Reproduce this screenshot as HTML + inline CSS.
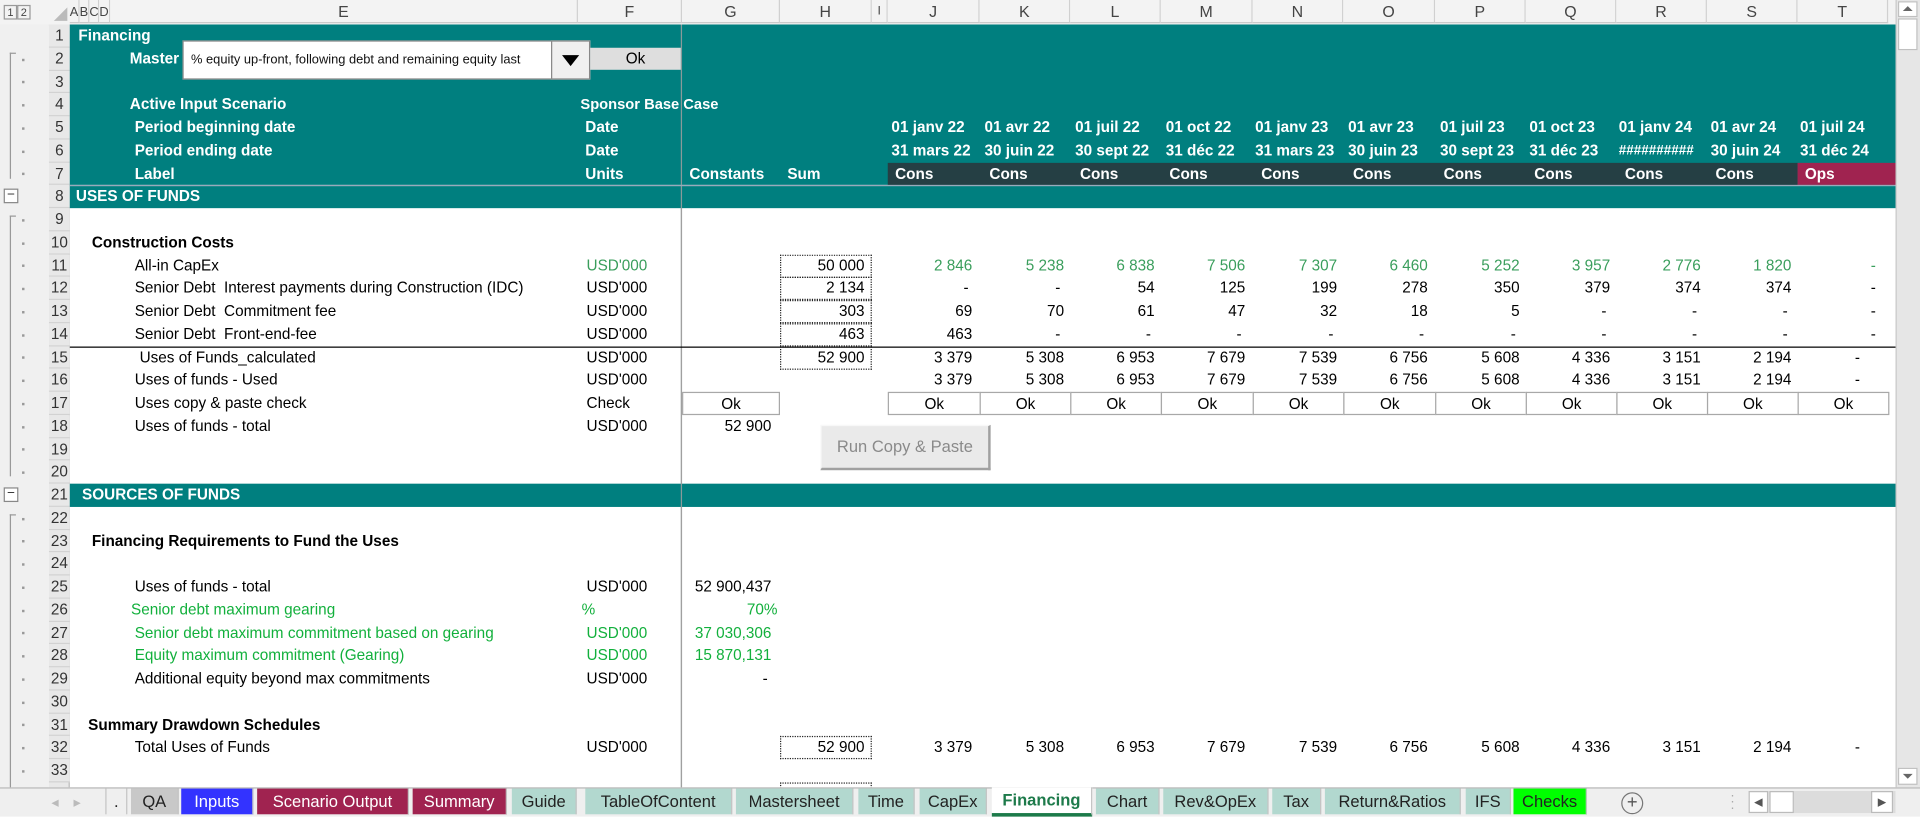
<!DOCTYPE html>
<html><head><meta charset="utf-8">
<style>
html,body{margin:0;padding:0;width:1920px;height:817px;overflow:hidden;background:#fff}
#w{position:absolute;left:0;top:0;width:1568px;height:667px;transform:scale(1.22449);transform-origin:0 0;font-family:"Liberation Sans Narrow","Liberation Sans",sans-serif;font-size:12.5px;color:#000;overflow:hidden}
.a{position:absolute;white-space:nowrap}
.t{height:18.75px;line-height:18.75px}
.b{font-weight:bold}
.wt{color:#fff}
.r{text-align:right}
.g1{color:#3a9e5c}
.g2{color:#12b03c}
.teal{background:#007f7f}
.hdr{position:absolute;top:0;height:19px;line-height:20px;text-align:center;color:#444;font-family:"Liberation Sans",sans-serif;font-size:13px;border-right:1px solid #d0d0d0;box-sizing:border-box;background:#f3f3f3;border-bottom:1px solid #c8c8c8}
.sm{font-size:10.5px}
.rh{position:absolute;left:40px;width:17px;height:18.75px;line-height:18.75px;text-align:center;color:#333;font-size:12.5px;background:#e8e8e8;border-bottom:1px solid #d2d2d2;box-sizing:border-box}
.ok{position:absolute;height:19px;line-height:19px;text-align:center;border:1px solid #a8a8a8;box-sizing:border-box;background:#fff}
.dot{position:absolute;border:1px dotted #222;box-sizing:border-box}
.tab{position:absolute;top:644px;height:21px;line-height:21px;text-align:center;font-size:13.5px;color:#222;box-sizing:border-box;border-right:1px solid #c4c4c4}
.pt{background:#b2d8cf}
.mg{background:#a02350;color:#fff}
.gd{position:absolute;left:18px;width:2px;height:2px;background:#999}
</style></head><body><div id="w">

<!-- column header -->
<div class="a" style="left:0;top:0;width:1548px;height:20px;background:#f3f3f3;border-bottom:1px solid #c8c8c8"></div>
<div class="a" style="left:3px;top:4px;width:9px;height:10px;border:1px solid #999;font-size:9px;line-height:10px;text-align:center;color:#444;font-family:'Liberation Sans',sans-serif">1</div>
<div class="a" style="left:14px;top:4px;width:9px;height:10px;border:1px solid #999;font-size:9px;line-height:10px;text-align:center;color:#444;font-family:'Liberation Sans',sans-serif">2</div>
<div class="a" style="left:44px;top:6px;width:0;height:0;border-left:11px solid transparent;border-bottom:11px solid #bbb"></div>
<div class="hdr sm" style="left:57px;width:8px">A</div>
<div class="hdr sm" style="left:65px;width:8px">B</div>
<div class="hdr sm" style="left:73px;width:8px">C</div>
<div class="hdr sm" style="left:81px;width:9px">D</div>
<div class="hdr" style="left:90px;width:382px">E</div>
<div class="hdr" style="left:472px;width:85px">F</div>
<div class="hdr" style="left:557px;width:80px">G</div>
<div class="hdr" style="left:637px;width:75px">H</div>
<div class="hdr" style="left:712px;width:13px;font-size:10px">I</div>
<div class="hdr" style="left:725px;width:75px">J</div>
<div class="hdr" style="left:800px;width:74px">K</div>
<div class="hdr" style="left:874px;width:74px">L</div>
<div class="hdr" style="left:948px;width:75px">M</div>
<div class="hdr" style="left:1023px;width:74px">N</div>
<div class="hdr" style="left:1097px;width:75px">O</div>
<div class="hdr" style="left:1172px;width:74px">P</div>
<div class="hdr" style="left:1246px;width:74px">Q</div>
<div class="hdr" style="left:1320px;width:74px">R</div>
<div class="hdr" style="left:1394px;width:74px">S</div>
<div class="hdr" style="left:1468px;width:74px">T</div>

<!-- gutter -->
<div class="a" style="left:0;top:20px;width:40px;height:623px;background:#f0f0f0"></div>
<div class="a" style="left:40px;top:20px;width:17px;height:623px;background:#e8e8e8;border-right:1px solid #bcbcbc;box-sizing:border-box"></div>
<div class="a" style="left:8px;top:43px;width:4px;height:102px;border-left:1px solid #999;border-top:1px solid #999"></div>
<div class="a" style="left:8px;top:176px;width:4px;height:212px;border-left:1px solid #999;border-top:1px solid #999"></div>
<div class="a" style="left:8px;top:420px;width:4px;height:223px;border-left:1px solid #999;border-top:1px solid #999"></div>
<div class="gd" style="top:48px"></div><div class="gd" style="top:66px"></div><div class="gd" style="top:85px"></div><div class="gd" style="top:104px"></div><div class="gd" style="top:123px"></div><div class="gd" style="top:141px"></div>
<div class="gd" style="top:179px"></div><div class="gd" style="top:198px"></div><div class="gd" style="top:216px"></div><div class="gd" style="top:235px"></div><div class="gd" style="top:254px"></div><div class="gd" style="top:273px"></div><div class="gd" style="top:291px"></div><div class="gd" style="top:310px"></div><div class="gd" style="top:329px"></div><div class="gd" style="top:348px"></div><div class="gd" style="top:366px"></div><div class="gd" style="top:385px"></div>
<div class="gd" style="top:423px"></div><div class="gd" style="top:441px"></div><div class="gd" style="top:460px"></div><div class="gd" style="top:479px"></div><div class="gd" style="top:498px"></div><div class="gd" style="top:516px"></div><div class="gd" style="top:535px"></div><div class="gd" style="top:554px"></div><div class="gd" style="top:573px"></div><div class="gd" style="top:591px"></div><div class="gd" style="top:610px"></div><div class="gd" style="top:629px"></div>
<div class="a" style="left:3px;top:154px;width:10px;height:10px;border:1px solid #888;background:#fff;font-size:11px;line-height:9px;text-align:center;color:#333">−</div>
<div class="a" style="left:3px;top:398px;width:10px;height:10px;border:1px solid #888;background:#fff;font-size:11px;line-height:9px;text-align:center;color:#333">−</div>

<div class="rh" style="top:20px">1</div><div class="rh" style="top:38.75px">2</div><div class="rh" style="top:57.5px">3</div><div class="rh" style="top:76.25px">4</div><div class="rh" style="top:95px">5</div><div class="rh" style="top:113.75px">6</div><div class="rh" style="top:132.5px">7</div><div class="rh" style="top:151.25px">8</div><div class="rh" style="top:170px">9</div><div class="rh" style="top:188.75px">10</div><div class="rh" style="top:207.5px">11</div><div class="rh" style="top:226.25px">12</div><div class="rh" style="top:245px">13</div><div class="rh" style="top:263.75px">14</div><div class="rh" style="top:282.5px">15</div><div class="rh" style="top:301.25px">16</div><div class="rh" style="top:320px">17</div><div class="rh" style="top:338.75px">18</div><div class="rh" style="top:357.5px">19</div><div class="rh" style="top:376.25px">20</div><div class="rh" style="top:395px">21</div><div class="rh" style="top:413.75px">22</div><div class="rh" style="top:432.5px">23</div><div class="rh" style="top:451.25px">24</div><div class="rh" style="top:470px">25</div><div class="rh" style="top:488.75px">26</div><div class="rh" style="top:507.5px">27</div><div class="rh" style="top:526.25px">28</div><div class="rh" style="top:545px">29</div><div class="rh" style="top:563.75px">30</div><div class="rh" style="top:582.5px">31</div><div class="rh" style="top:601.25px">32</div><div class="rh" style="top:620px">33</div>

<!-- teal bands -->
<div class="a teal" style="left:57px;top:20px;width:1491px;height:131px"></div>
<div class="a teal" style="left:57px;top:151.25px;width:1491px;height:18.75px;border-top:1px solid #8fb5b5;box-sizing:border-box"></div>
<div class="a teal" style="left:57px;top:395px;width:1491px;height:18.75px"></div>
<div class="a" style="left:725px;top:132.5px;width:743px;height:18.75px;background:#253f44"></div>
<div class="a" style="left:1468px;top:132.5px;width:80px;height:18.75px;background:#a02350"></div>
<div class="a" style="left:556px;top:20px;width:1px;height:623px;background:#8a9a9a"></div>
<div class="a" style="left:556px;top:170px;width:1px;height:225px;background:#a0a0a0"></div>
<div class="a" style="left:556px;top:414px;width:1px;height:229px;background:#a0a0a0"></div>

<!-- header texts -->
<div class="a t b wt" style="left:64px;top:20px">Financing</div>
<div class="a t b wt" style="left:106px;top:38.75px">Master</div>
<div class="a" style="left:149px;top:33px;width:333px;height:32px;background:#fff;border:1px solid #888;box-sizing:border-box"></div>
<div class="a" style="left:156px;top:41px;font-size:10.5px;line-height:16px;color:#111">% equity up-front, following debt and remaining equity last</div>
<div class="a" style="left:450px;top:33px;width:32px;height:32px;background:#f0f0f0;border:1px solid #888;box-sizing:border-box"></div>
<div class="a" style="left:459px;top:45px;width:0;height:0;border-left:7px solid transparent;border-right:7px solid transparent;border-top:9px solid #000"></div>
<div class="a" style="left:482px;top:38.75px;width:74px;height:18px;background:#dedede;text-align:center;line-height:18px">Ok</div>
<div class="a t b wt" style="left:106px;top:76.25px">Active Input Scenario</div>
<div class="a t b wt" style="left:474px;top:76.25px;font-size:12px">Sponsor Base Case</div>
<div class="a t b wt" style="left:110px;top:95px">Period beginning date</div>
<div class="a t b wt" style="left:478px;top:95px">Date</div>
<div class="a t b wt" style="left:110px;top:113.75px">Period ending date</div>
<div class="a t b wt" style="left:478px;top:113.75px">Date</div>
<div class="a t b wt" style="left:110px;top:132.5px">Label</div>
<div class="a t b wt" style="left:478px;top:132.5px">Units</div>
<div class="a t b wt" style="left:563px;top:132.5px">Constants</div>
<div class="a t b wt" style="left:643px;top:132.5px">Sum</div>
<div class="a" style="left:57px;top:150.5px;width:1491px;height:1px;background:#9ab"></div>

<div class="a t b wt" style="left:728px;top:95px">01 janv 22</div><div class="a t b wt" style="left:804px;top:95px">01 avr 22</div><div class="a t b wt" style="left:878px;top:95px">01 juil 22</div><div class="a t b wt" style="left:952px;top:95px">01 oct 22</div><div class="a t b wt" style="left:1025px;top:95px">01 janv 23</div><div class="a t b wt" style="left:1101px;top:95px">01 avr 23</div><div class="a t b wt" style="left:1176px;top:95px">01 juil 23</div><div class="a t b wt" style="left:1249px;top:95px">01 oct 23</div><div class="a t b wt" style="left:1322px;top:95px">01 janv 24</div><div class="a t b wt" style="left:1397px;top:95px">01 avr 24</div><div class="a t b wt" style="left:1470px;top:95px">01 juil 24</div>
<div class="a t b wt" style="left:728px;top:113.75px">31 mars 22</div><div class="a t b wt" style="left:804px;top:113.75px">30 juin 22</div><div class="a t b wt" style="left:878px;top:113.75px">30 sept 22</div><div class="a t b wt" style="left:952px;top:113.75px">31 déc 22</div><div class="a t b wt" style="left:1025px;top:113.75px">31 mars 23</div><div class="a t b wt" style="left:1101px;top:113.75px">30 juin 23</div><div class="a t b wt" style="left:1176px;top:113.75px">30 sept 23</div><div class="a t b wt" style="left:1249px;top:113.75px">31 déc 23</div><div class="a t b wt" style="left:1322px;top:113.75px;font-size:11px">##########</div><div class="a t b wt" style="left:1397px;top:113.75px">30 juin 24</div><div class="a t b wt" style="left:1470px;top:113.75px">31 déc 24</div>
<div class="a t b wt" style="left:731px;top:132.5px">Cons</div><div class="a t b wt" style="left:808px;top:132.5px">Cons</div><div class="a t b wt" style="left:882px;top:132.5px">Cons</div><div class="a t b wt" style="left:955px;top:132.5px">Cons</div><div class="a t b wt" style="left:1030px;top:132.5px">Cons</div><div class="a t b wt" style="left:1105px;top:132.5px">Cons</div><div class="a t b wt" style="left:1179px;top:132.5px">Cons</div><div class="a t b wt" style="left:1253px;top:132.5px">Cons</div><div class="a t b wt" style="left:1327px;top:132.5px">Cons</div><div class="a t b wt" style="left:1401px;top:132.5px">Cons</div><div class="a t b wt" style="left:1474px;top:132.5px">Ops</div>

<div class="a t b wt" style="left:62px;top:151.25px">USES OF FUNDS</div>
<div class="a t b wt" style="left:67px;top:395px">SOURCES OF FUNDS</div>

<!-- uses -->
<div class="a t b" style="left:75px;top:188.75px">Construction Costs</div>
<div class="a t" style="left:110px;top:207.5px">All-in CapEx</div><div class="a t g1" style="left:479px;top:207.5px">USD'000</div>
<div class="a t" style="left:110px;top:226.25px">Senior Debt&nbsp; Interest payments during Construction (IDC)</div><div class="a t" style="left:479px;top:226.25px">USD'000</div>
<div class="a t" style="left:110px;top:245px">Senior Debt&nbsp; Commitment fee</div><div class="a t" style="left:479px;top:245px">USD'000</div>
<div class="a t" style="left:110px;top:263.75px">Senior Debt&nbsp; Front-end-fee</div><div class="a t" style="left:479px;top:263.75px">USD'000</div>
<div class="a t" style="left:114px;top:282.5px">Uses of Funds_calculated</div><div class="a t" style="left:479px;top:282.5px">USD'000</div>
<div class="a t" style="left:110px;top:301.25px">Uses of funds - Used</div><div class="a t" style="left:479px;top:301.25px">USD'000</div>
<div class="a t" style="left:110px;top:320px">Uses copy &amp; paste check</div><div class="a t" style="left:479px;top:320px">Check</div>
<div class="a t" style="left:110px;top:338.75px">Uses of funds - total</div><div class="a t" style="left:479px;top:338.75px">USD'000</div>
<div class="a" style="left:57px;top:283px;width:1491px;height:1px;background:#000"></div>

<div class="dot" style="left:637px;top:207.5px;width:75px;height:19px"></div><div class="dot" style="left:637px;top:226.25px;width:75px;height:19px"></div><div class="dot" style="left:637px;top:245px;width:75px;height:19px"></div><div class="dot" style="left:637px;top:263.75px;width:75px;height:19px"></div><div class="dot" style="left:637px;top:282.5px;width:75px;height:19px"></div>
<div class="a t r" style="left:637px;width:69px;top:207.5px">50 000</div><div class="a t r" style="left:637px;width:69px;top:226.25px">2 134</div><div class="a t r" style="left:637px;width:69px;top:245px">303</div><div class="a t r" style="left:637px;width:69px;top:263.75px">463</div><div class="a t r" style="left:637px;width:69px;top:282.5px">52 900</div>

<div class="a t r g1" style="left:725px;width:69px;top:207.5px">2 846</div><div class="a t r g1" style="left:800px;width:69px;top:207.5px">5 238</div><div class="a t r g1" style="left:874px;width:69px;top:207.5px">6 838</div><div class="a t r g1" style="left:948px;width:69px;top:207.5px">7 506</div><div class="a t r g1" style="left:1023px;width:69px;top:207.5px">7 307</div><div class="a t r g1" style="left:1097px;width:69px;top:207.5px">6 460</div><div class="a t r g1" style="left:1172px;width:69px;top:207.5px">5 252</div><div class="a t r g1" style="left:1246px;width:69px;top:207.5px">3 957</div><div class="a t r g1" style="left:1320px;width:69px;top:207.5px">2 776</div><div class="a t r g1" style="left:1394px;width:69px;top:207.5px">1 820</div><div class="a t r g1" style="left:1468px;width:64px;top:207.5px">-</div>
<div class="a t r" style="left:725px;width:66px;top:226.25px">-</div><div class="a t r" style="left:800px;width:66px;top:226.25px">-</div><div class="a t r" style="left:874px;width:69px;top:226.25px">54</div><div class="a t r" style="left:948px;width:69px;top:226.25px">125</div><div class="a t r" style="left:1023px;width:69px;top:226.25px">199</div><div class="a t r" style="left:1097px;width:69px;top:226.25px">278</div><div class="a t r" style="left:1172px;width:69px;top:226.25px">350</div><div class="a t r" style="left:1246px;width:69px;top:226.25px">379</div><div class="a t r" style="left:1320px;width:69px;top:226.25px">374</div><div class="a t r" style="left:1394px;width:69px;top:226.25px">374</div><div class="a t r" style="left:1468px;width:64px;top:226.25px">-</div>
<div class="a t r" style="left:725px;width:69px;top:245px">69</div><div class="a t r" style="left:800px;width:69px;top:245px">70</div><div class="a t r" style="left:874px;width:69px;top:245px">61</div><div class="a t r" style="left:948px;width:69px;top:245px">47</div><div class="a t r" style="left:1023px;width:69px;top:245px">32</div><div class="a t r" style="left:1097px;width:69px;top:245px">18</div><div class="a t r" style="left:1172px;width:69px;top:245px">5</div><div class="a t r" style="left:1246px;width:66px;top:245px">-</div><div class="a t r" style="left:1320px;width:66px;top:245px">-</div><div class="a t r" style="left:1394px;width:66px;top:245px">-</div><div class="a t r" style="left:1468px;width:64px;top:245px">-</div>
<div class="a t r" style="left:725px;width:69px;top:263.75px">463</div><div class="a t r" style="left:800px;width:66px;top:263.75px">-</div><div class="a t r" style="left:874px;width:66px;top:263.75px">-</div><div class="a t r" style="left:948px;width:66px;top:263.75px">-</div><div class="a t r" style="left:1023px;width:66px;top:263.75px">-</div><div class="a t r" style="left:1097px;width:66px;top:263.75px">-</div><div class="a t r" style="left:1172px;width:66px;top:263.75px">-</div><div class="a t r" style="left:1246px;width:66px;top:263.75px">-</div><div class="a t r" style="left:1320px;width:66px;top:263.75px">-</div><div class="a t r" style="left:1394px;width:66px;top:263.75px">-</div><div class="a t r" style="left:1468px;width:64px;top:263.75px">-</div>
<div class="a t r" style="left:725px;width:69px;top:282.5px">3 379</div><div class="a t r" style="left:800px;width:69px;top:282.5px">5 308</div><div class="a t r" style="left:874px;width:69px;top:282.5px">6 953</div><div class="a t r" style="left:948px;width:69px;top:282.5px">7 679</div><div class="a t r" style="left:1023px;width:69px;top:282.5px">7 539</div><div class="a t r" style="left:1097px;width:69px;top:282.5px">6 756</div><div class="a t r" style="left:1172px;width:69px;top:282.5px">5 608</div><div class="a t r" style="left:1246px;width:69px;top:282.5px">4 336</div><div class="a t r" style="left:1320px;width:69px;top:282.5px">3 151</div><div class="a t r" style="left:1394px;width:69px;top:282.5px">2 194</div><div class="a t r" style="left:1468px;width:51px;top:282.5px">-</div>
<div class="a t r" style="left:725px;width:69px;top:301.25px">3 379</div><div class="a t r" style="left:800px;width:69px;top:301.25px">5 308</div><div class="a t r" style="left:874px;width:69px;top:301.25px">6 953</div><div class="a t r" style="left:948px;width:69px;top:301.25px">7 679</div><div class="a t r" style="left:1023px;width:69px;top:301.25px">7 539</div><div class="a t r" style="left:1097px;width:69px;top:301.25px">6 756</div><div class="a t r" style="left:1172px;width:69px;top:301.25px">5 608</div><div class="a t r" style="left:1246px;width:69px;top:301.25px">4 336</div><div class="a t r" style="left:1320px;width:69px;top:301.25px">3 151</div><div class="a t r" style="left:1394px;width:69px;top:301.25px">2 194</div><div class="a t r" style="left:1468px;width:51px;top:301.25px">-</div>
<div class="ok" style="left:557px;top:320px;width:80px">Ok</div>
<div class="ok" style="left:725px;top:320px;width:76px">Ok</div><div class="ok" style="left:800px;top:320px;width:75px">Ok</div><div class="ok" style="left:874px;top:320px;width:75px">Ok</div><div class="ok" style="left:948px;top:320px;width:76px">Ok</div><div class="ok" style="left:1023px;top:320px;width:75px">Ok</div><div class="ok" style="left:1097px;top:320px;width:76px">Ok</div><div class="ok" style="left:1172px;top:320px;width:75px">Ok</div><div class="ok" style="left:1246px;top:320px;width:75px">Ok</div><div class="ok" style="left:1320px;top:320px;width:75px">Ok</div><div class="ok" style="left:1394px;top:320px;width:75px">Ok</div><div class="ok" style="left:1468px;top:320px;width:75px">Ok</div>
<div class="a t r" style="left:557px;width:73px;top:338.75px">52 900</div>
<div class="a" style="left:670px;top:347px;width:139px;height:37px;background:#eaeaea;border-right:2px solid #a0a0a0;border-bottom:2px solid #a0a0a0;border-left:1px solid #f8f8f8;border-top:1px solid #f8f8f8;box-sizing:border-box;color:#8a8a8a;text-align:center;line-height:34px;font-size:13.5px">Run Copy &amp; Paste</div>

<!-- sources -->
<div class="a t b" style="left:75px;top:432.5px">Financing Requirements to Fund the Uses</div>
<div class="a t" style="left:110px;top:470px">Uses of funds - total</div><div class="a t" style="left:479px;top:470px">USD'000</div><div class="a t r" style="left:557px;width:73px;top:470px">52 900,437</div>
<div class="a t g2" style="left:107px;top:488.75px">Senior debt maximum gearing</div><div class="a t g2" style="left:475px;top:488.75px">%</div><div class="a t r g2" style="left:557px;width:78px;top:488.75px">70%</div>
<div class="a t g2" style="left:110px;top:507.5px">Senior debt maximum commitment based on gearing</div><div class="a t g2" style="left:479px;top:507.5px">USD'000</div><div class="a t r g2" style="left:557px;width:73px;top:507.5px">37 030,306</div>
<div class="a t g2" style="left:110px;top:526.25px">Equity maximum commitment (Gearing)</div><div class="a t g2" style="left:479px;top:526.25px">USD'000</div><div class="a t r g2" style="left:557px;width:73px;top:526.25px">15 870,131</div>
<div class="a t" style="left:110px;top:545px">Additional equity beyond max commitments</div><div class="a t" style="left:479px;top:545px">USD'000</div><div class="a t r" style="left:557px;width:70px;top:545px">-</div>
<div class="a t b" style="left:72px;top:582.5px">Summary Drawdown Schedules</div>
<div class="a t" style="left:110px;top:601.25px">Total Uses of Funds</div><div class="a t" style="left:479px;top:601.25px">USD'000</div>
<div class="dot" style="left:637px;top:601.25px;width:75px;height:19px"></div>
<div class="dot" style="left:637px;top:638.75px;width:75px;height:19px"></div>
<div class="a t r" style="left:637px;width:69px;top:601.25px">52 900</div>
<div class="a t r" style="left:725px;width:69px;top:601.25px">3 379</div><div class="a t r" style="left:800px;width:69px;top:601.25px">5 308</div><div class="a t r" style="left:874px;width:69px;top:601.25px">6 953</div><div class="a t r" style="left:948px;width:69px;top:601.25px">7 679</div><div class="a t r" style="left:1023px;width:69px;top:601.25px">7 539</div><div class="a t r" style="left:1097px;width:69px;top:601.25px">6 756</div><div class="a t r" style="left:1172px;width:69px;top:601.25px">5 608</div><div class="a t r" style="left:1246px;width:69px;top:601.25px">4 336</div><div class="a t r" style="left:1320px;width:69px;top:601.25px">3 151</div><div class="a t r" style="left:1394px;width:69px;top:601.25px">2 194</div><div class="a t r" style="left:1468px;width:51px;top:601.25px">-</div>

<!-- vertical scrollbar -->
<div class="a" style="left:1548px;top:0;width:20px;height:643px;background:#e6e6e6;border-left:1px solid #c8c8c8;box-sizing:border-box"></div>
<div class="a" style="left:1550px;top:1px;width:16px;height:13px;background:#fff;border:1px solid #c0c0c0;box-sizing:border-box"></div>
<div class="a" style="left:1554px;top:5px;width:0;height:0;border-left:4px solid transparent;border-right:4px solid transparent;border-bottom:4px solid #666"></div>
<div class="a" style="left:1550px;top:15px;width:16px;height:26px;background:#fff;border:1px solid #c0c0c0;box-sizing:border-box"></div>
<div class="a" style="left:1550px;top:627px;width:16px;height:14px;background:#fff;border:1px solid #c0c0c0;box-sizing:border-box"></div>
<div class="a" style="left:1554px;top:632px;width:0;height:0;border-left:4px solid transparent;border-right:4px solid transparent;border-top:4px solid #666"></div>

<!-- tab bar -->
<div class="a" style="left:0;top:643px;width:1568px;height:24px;background:#efefef;border-top:1px solid #b8b8b8;box-sizing:border-box"></div>
<div class="a" style="left:42px;top:648px;color:#bbb;font-size:12px">◂</div><div class="a" style="left:60px;top:648px;color:#bbb;font-size:12px">▸</div>
<div class="tab" style="left:86px;width:18px;border-left:1px solid #c4c4c4">.</div>
<div class="tab" style="left:107px;width:39px;background:#c8c8c8">QA</div>
<div class="tab" style="left:148px;width:59px;background:#3333ff;color:#fff">Inputs</div>
<div class="tab mg" style="left:210px;width:124px">Scenario Output</div>
<div class="tab mg" style="left:337px;width:77px">Summary</div>
<div class="tab pt" style="left:418px;width:53px">Guide</div>
<div class="tab pt" style="left:478px;width:120px">TableOfContent</div>
<div class="tab pt" style="left:601px;width:96px">Mastersheet</div>
<div class="tab pt" style="left:701px;width:46px">Time</div>
<div class="tab pt" style="left:751px;width:55px">CapEx</div>
<div class="tab" style="left:810px;width:82px;background:#fff;color:#1d7a4a;font-weight:bold;top:643px;height:24px;border-bottom:3px solid #1d7a4a">Financing</div>
<div class="tab pt" style="left:895px;width:52px">Chart</div>
<div class="tab pt" style="left:950px;width:86px">Rev&amp;OpEx</div>
<div class="tab pt" style="left:1039px;width:40px">Tax</div>
<div class="tab pt" style="left:1082px;width:111px">Return&amp;Ratios</div>
<div class="tab pt" style="left:1197px;width:37px">IFS</div>
<div class="tab" style="left:1236px;width:60px;background:#00ff00">Checks</div>
<div class="a" style="left:1324px;top:647px;width:16px;height:16px;border:1px solid #777;border-radius:50%;text-align:center;line-height:16px;color:#555;font-size:15px;font-family:'Liberation Sans',sans-serif">+</div>
<div class="a" style="left:1413px;top:648px;color:#aaa;font-size:11px;line-height:5px">·<br>·<br>·</div>
<div class="a" style="left:1428px;top:646px;width:120px;height:18px;background:#dcdcdc"></div>
<div class="a" style="left:1428px;top:646px;width:16px;height:18px;background:#fff;border:1px solid #bbb;box-sizing:border-box;font-size:9px;line-height:16px;text-align:center;color:#555">◀</div>
<div class="a" style="left:1445px;top:646px;width:20px;height:18px;background:#fff;border:1px solid #bbb;box-sizing:border-box"></div>
<div class="a" style="left:1528px;top:646px;width:18px;height:18px;background:#fff;border:1px solid #bbb;box-sizing:border-box;font-size:9px;line-height:16px;text-align:center;color:#555">▶</div>
</div></body></html>
